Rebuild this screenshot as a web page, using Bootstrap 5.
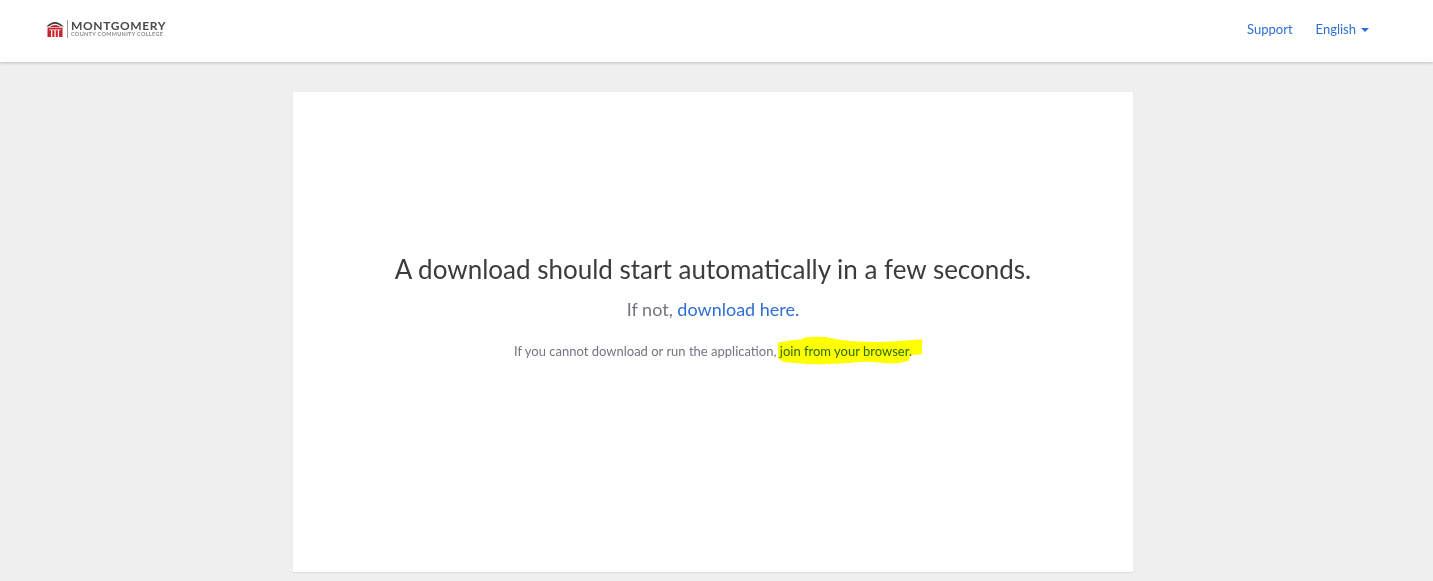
<!DOCTYPE html>
<html lang="en">

<head>
  <meta charset="UTF-8">
  <meta name="viewport" content="width=device-width, initial-scale=1.0">
  <title>Launch Meeting</title>
  <link href="https://cdn.jsdelivr.net/npm/bootstrap@5.3.0/dist/css/bootstrap.min.css" rel="stylesheet">
  <style>
    body {
      background-color: #efefef;
      font-family: Lato, "Liberation Sans", sans-serif;
      color: #757580;
      height: 581px;
      overflow: hidden;
    }

    a {
      color: #2d6fd6;
      text-decoration: none;
    }

    .top-bar {
      height: 62px;
      padding: 0 64px 2px 46px;
      box-shadow: 0 1px 3px rgba(0, 0, 0, 0.2);
    }

    .brand-link {
      padding-bottom: 2px;
    }

    .brand-name {
      line-height: 1;
      padding-left: 3px;
      margin-left: 3px;
      border-left: 1px solid #9a9a9a;
      color: #4a4a4a;
    }

    .brand-big {
      font-size: 12px;
      font-weight: 700;
      letter-spacing: 0.62px;
      line-height: 11px;
    }

    .brand-small {
      font-size: 5.5px;
      font-weight: 700;
      color: #8a8a8a;
      line-height: 7px;
      letter-spacing: 0.32px;
    }

    .top-link {
      font-size: 13px;
    }

    .top-links {
      gap: 23px;
    }

    .caret-down {
      display: inline-block;
      border-top: 4px solid #2d6fd6;
      border-left: 4px solid transparent;
      border-right: 4px solid transparent;
      margin-left: 5px;
      vertical-align: 2px;
    }

    .main-panel {
      width: 840px;
      height: 480px;
      margin: 30px 0 0 293px;
      padding-top: 161px;
      box-shadow: 0 1px 1px rgba(0, 0, 0, 0.08);
    }

    .main-title {
      font-size: 26px;
      font-weight: 400;
      color: #3c3c3c;
      line-height: 32px;
      margin-bottom: 12px;
    }

    .sub-title {
      font-size: 18px;
      line-height: 24px;
      margin-bottom: 21px;
    }

    .small-line {
      font-size: 13px;
      line-height: 18px;
      margin-bottom: 0;
    }

    .marked-wrap {
      position: relative;
    }

    /* marker scribble that lies over the link */
    .marker {
      position: absolute;
      left: -3px;
      top: -7px;
      width: 146px;
      height: 29px;
      mix-blend-mode: multiply;
    }
  </style>
</head>

<body>
  <!-- top bar -->
  <nav class="top-bar bg-white d-flex align-items-center justify-content-between">
    <a class="brand-link d-flex align-items-center" href="#">
      <svg width="18" height="18" viewBox="0 0 18 18">
        <path d="M0.5 6.5 Q9 -2.5 17.5 6.5 L15.5 6.5 Q9 1 2.5 6.5 Z" fill="#3a3a3a" />
        <path d="M3.5 7 Q9 3 14.5 7 Z" fill="#c8232c" />
        <path d="M1.5 7.6 H16.5 V17 H1.5 Z" fill="#c8232c" />
        <path d="M3.2 9.4 H14.8 V10.2 H3.2 Z M5 10.2 H6.3 V17 H5 Z M8.4 10.2 H9.7 V17 H8.4 Z M11.8 10.2 H13.1 V17 H11.8 Z" fill="#fff" />
      </svg>
      <span class="brand-name d-flex flex-column">
        <span class="brand-big">MONTGOMERY</span>
        <span class="brand-small">COUNTY COMMUNITY COLLEGE</span>
      </span>
    </a>
    <div class="top-links d-flex align-items-center">
      <a class="top-link" href="#">Support</a>
      <a class="top-link" href="#">English<span class="caret-down"></span></a>
    </div>
  </nav>

  <!-- content -->
  <div class="main-panel bg-white text-center">
    <h1 class="main-title">A download should start automatically in a few seconds.</h1>
    <p class="sub-title">If not, <a href="#">download here.</a></p>
    <p class="small-line">If you cannot download or run the application, <span class="marked-wrap"><a href="#">join from your browser.</a><svg class="marker" viewBox="0 0 145 27" preserveAspectRatio="none">
          <path d="M1 6 Q14 4 24 3 Q30 0 48 1 Q62 4 76 5 Q100 6 118 5 L144 3 L144 17 L132 18 L131 23 Q118 27 104 25 Q88 23 74 25 Q50 27 30 26 Q14 25 6 24 L1 21 Z" fill="#ffff00" />
        </svg></span></p>
  </div>

  <script src="https://cdn.jsdelivr.net/npm/bootstrap@5.3.0/dist/js/bootstrap.bundle.min.js"></script>
</body>

</html>
